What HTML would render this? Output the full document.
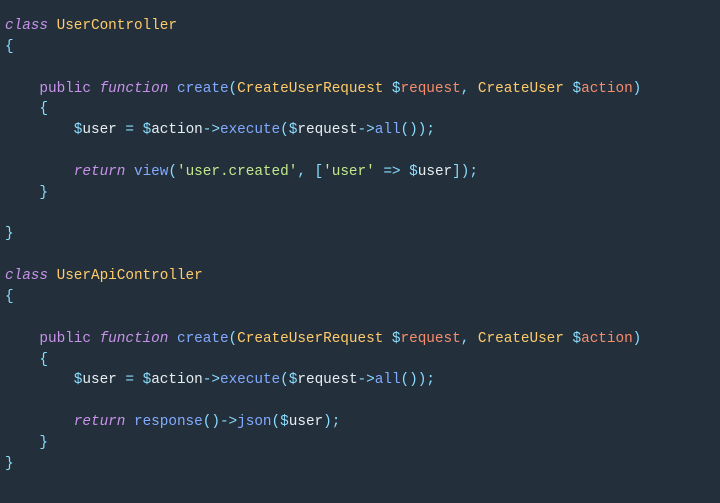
<!DOCTYPE html>
<html><head><style>
html,body{margin:0;padding:0;background:#232f3a;width:720px;height:503px;overflow:hidden}
pre{margin:0;position:absolute;left:5px;top:16px;font-family:"Liberation Mono",monospace;font-size:14.4px;letter-spacing:-0.04px;line-height:20.85px;color:#e6eef2}
.k{color:#c792ea;font-style:italic}.p{color:#c792ea}.c{color:#ffcb6b}.b{color:#89ddff}.f{color:#82aaff}.v{color:#f78c6c}.s{color:#c3e88d}
</style></head><body><pre><span class="k">class</span> <span class="c">UserController</span>
<span class="b">{</span>

    <span class="p">public</span> <span class="k">function</span> <span class="f">create</span><span class="b">(</span><span class="c">CreateUserRequest</span> <span class="b">$</span><span class="v">request</span><span class="b">,</span> <span class="c">CreateUser</span> <span class="b">$</span><span class="v">action</span><span class="b">)</span>
    <span class="b">{</span>
        <span class="b">$</span>user <span class="b">=</span> <span class="b">$</span>action<span class="b">-&gt;</span><span class="f">execute</span><span class="b">(</span><span class="b">$</span>request<span class="b">-&gt;</span><span class="f">all</span><span class="b">());</span>

        <span class="k">return</span> <span class="f">view</span><span class="b">(</span><span class="s">'user.created'</span><span class="b">,</span> <span class="b">[</span><span class="s">'user'</span> <span class="b">=&gt;</span> <span class="b">$</span>user<span class="b">]);</span>
    <span class="b">}</span>

<span class="b">}</span>

<span class="k">class</span> <span class="c">UserApiController</span>
<span class="b">{</span>

    <span class="p">public</span> <span class="k">function</span> <span class="f">create</span><span class="b">(</span><span class="c">CreateUserRequest</span> <span class="b">$</span><span class="v">request</span><span class="b">,</span> <span class="c">CreateUser</span> <span class="b">$</span><span class="v">action</span><span class="b">)</span>
    <span class="b">{</span>
        <span class="b">$</span>user <span class="b">=</span> <span class="b">$</span>action<span class="b">-&gt;</span><span class="f">execute</span><span class="b">(</span><span class="b">$</span>request<span class="b">-&gt;</span><span class="f">all</span><span class="b">());</span>

        <span class="k">return</span> <span class="f">response</span><span class="b">()-&gt;</span><span class="f">json</span><span class="b">(</span><span class="b">$</span>user<span class="b">);</span>
    <span class="b">}</span>
<span class="b">}</span></pre></body></html>
